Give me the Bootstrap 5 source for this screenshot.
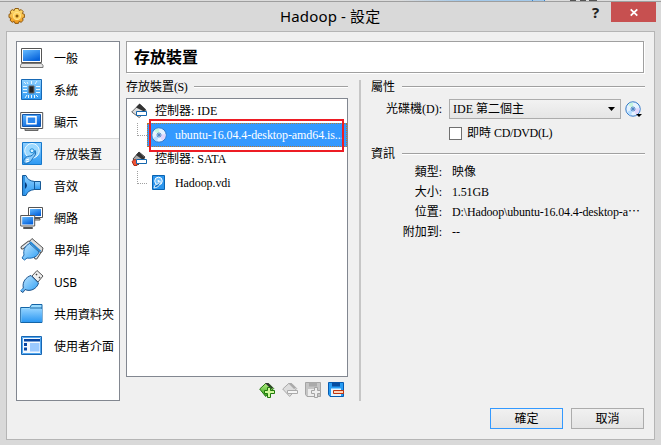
<!DOCTYPE html>
<html lang="zh-Hant">
<head>
<meta charset="utf-8">
<title>Hadoop - 設定</title>
<link rel="stylesheet" href="https://cdn.jsdelivr.net/npm/bootstrap@5.3.0/dist/css/bootstrap.min.css">
<style>
body{width:661px;height:445px;background:#d9d9d9;color:#000;font:12px/16px "Liberation Serif","Noto Sans CJK TC",serif;overflow:hidden}
svg{display:block;flex:none;overflow:visible}
.backdrop{height:2px;border-bottom:1px solid #9e9e9e;background:linear-gradient(90deg,#dcdcdc 400px,#a3c9ea 460px 532px,#3c87d0 532px 533px,#a3c9ea 533px 544px,#3c87d0 544px 545px,#dcdcdc 545px 570px,#555 570px 576px,#ddd 576px 580px,#555 580px 586px,#ddd 586px 589px,#555 589px 597px,#ddd 597px)}
.titlebar{height:29px;padding-left:8px}
.gear{margin-top:5px}
.caption{font:15px/20px "Noto Sans","Noto Sans CJK TC",sans-serif;letter-spacing:.15px;padding-top:4px;width:306px}
.help{font:bold 15px/20px "Noto Sans",sans-serif;color:#222;width:19px}
.close-btn{width:45px;height:20px;background:#c75050;border:0;margin:0 5px 0 6px;padding:0 0 0 1px}
.client{margin:0 6px;width:649px;height:409px;background:#f0f0f0;border:1px solid #b5b5b5;padding:9px}
.pages{width:104px;height:360px;background:#fff;border:1px solid #828790;font:12px/16px "Noto Sans","Noto Sans CJK TC",sans-serif}
.page-item{height:32px;padding:1px 0 0 3px;gap:10px;border:1px solid transparent;border-width:1px 0}
.page-item svg{margin-top:-1px}
.page-item.chosen{background:#f5f5f5;border-color:#dadada}
.main-area{margin-left:6px;width:518px}
.page-title{height:32px;background:#fff;border:1px solid #a0a0a0;box-shadow:1px 1px #fff;font:bold 16px/29px "Noto Sans CJK TC",sans-serif;padding-left:7px}
.body-row{width:520px;height:321px;margin-top:7px}
.left-col{width:222px}
.right-col{width:274px;margin-left:10px}
.divider{width:2px;background:#c6c6c6;margin-left:11px}
.group-title{height:13px;gap:7px}
.group-title::after{content:"";flex:1;height:2px;background:#a0a0a0;border-bottom:1px solid #fff}
.tight{letter-spacing:-.5px}
.tree{height:279px;margin-top:5px;background:#fff;border:1px solid #828790}
.tree-row{height:24px;padding-left:4px}
.ctl{gap:7px}
.branch{width:10px;height:13px;flex:none;margin:-12px 0 0 6px;border:1px dotted #a0a0a0;border-width:0 0 1px 1px}
.entry{height:24px;flex:1;min-width:0;padding-left:3px;gap:8px;border:1px dotted transparent}
.entry.chosen{background:#3399ff;color:#fff;border-color:#b87830}
.nm{letter-spacing:-.08px}
.marker{position:absolute;left:149px;top:119px;width:195px;height:33px;border:2px solid #ed1c24}
.tools{height:16px;gap:7px;margin-top:5px}
.lbl{width:71px;text-align:right;flex:none}
.info-row .lbl{margin-right:10px}
.drive-row{margin-top:6px}
.drive{width:172px;height:20px;border:1px solid #acacac;background:linear-gradient(#f2f2f2,#e5e5e5);margin-left:7px;padding:0 5px 0 3px}
.live-row{margin:7px 0 0 78px;height:14px}
.live{width:13px;height:13px;border:1px solid #707070;background:#fff;margin-right:5px}
.mid-title{margin-top:7px}
.info-list{margin-top:2px}
.info-row{height:20px}
.path{letter-spacing:-.14px}
.short{letter-spacing:-.35px}
.actions{margin:7px 1px 0 0}
.dlg{width:73px;height:21px;padding:0;border:1px solid #acacac;background:linear-gradient(#f1f1f1,#e4e4e4);font-size:12px;line-height:18px;color:#000}
.dlg.main{border-color:#3399ff}
</style>
<script src="https://cdn.jsdelivr.net/npm/bootstrap@5.3.0/dist/js/bootstrap.bundle.min.js"></script>
</head>
<body>
<svg width="0" height="0" class="position-absolute">
<defs>
<linearGradient id="blue" x1="0" y1="0" x2="0" y2="1"><stop stop-color="#8ed0ff"/><stop offset="1" stop-color="#2c98f2"/></linearGradient>
<linearGradient id="screen" x1="0" y1="0" x2=".6" y2="1"><stop stop-color="#64baff"/><stop offset="1" stop-color="#0764dc"/></linearGradient>
<linearGradient id="pale" x1="0" y1="0" x2="1" y2="1"><stop stop-color="#c7eaff"/><stop offset="1" stop-color="#2b9df5"/></linearGradient>
<linearGradient id="green" x1="0" y1="0" x2="0" y2="1"><stop stop-color="#b5ef83"/><stop offset="1" stop-color="#2d9e14"/></linearGradient>
<linearGradient id="gold" x1="0" y1="0" x2="0" y2="1"><stop stop-color="#ffe47a"/><stop offset="1" stop-color="#ef9517"/></linearGradient>
<symbol id="disc" viewBox="0 0 16 16"><circle cx="8" cy="8" r="7.2" fill="#e4f2ff" stroke="#3278c8"/><path d="M8 8 3 3.500A7 7 0 0 1 8 1.400Z" fill="#c5f4df"/><path d="M8 8 14.500 7A7 7 0 0 1 11 13.800Z" fill="#e0d5fb"/><path d="M8 8 2 11A7 7 0 0 0 6 14.500Z" fill="#b4dcff"/><circle cx="8" cy="8" r="2" fill="#fff" stroke="#2469b8" stroke-width=".8"/><circle cx="8" cy="8" r="1.100" fill="#2469b8"/></symbol>
</defs>
</svg>

<div class="backdrop"></div>
<header class="titlebar d-flex align-items-start">
  <svg class="gear" width="18" height="18" viewBox="0 0 18 18"><path d="M7 1.500h3.500l.7 2 2-.9 2 2-.8 2 2 .7v3.200l-2 .8.8 2-2.100 2-2-.9-.7 2H7l-.8-2-2 .9-2.100-2 .9-2-2-.8V7.300l2-.7-.9-2 2.100-2 2 .9z" fill="url(#gold)" stroke="#8f5a12"/><circle cx="9" cy="9" r="3.700" fill="#ffd15c" stroke="#ffe48c"/><circle cx="9" cy="9" r="1.500" fill="#89580c"/></svg>
  <div class="caption ms-auto">Hadoop - 設定</div>
  <div class="help text-center">?</div>
  <button class="close-btn d-flex align-items-center justify-content-center" aria-label="關閉"><svg width="8" height="7" viewBox="0 0 8 7"><path d="m.7.3 6.600 6.400m0-6.400L.7 6.700" stroke="#fff" stroke-width="1.800"/></svg></button>
</header>

<main class="client">
  <div class="d-flex">
    <nav class="pages">
      <div class="page-item d-flex align-items-center"><svg width="24" height="24"><path d="M1.500 2.500h20v14h-20z" fill="#fff" stroke="#555"/><path d="M3 4h17v11H3z" fill="url(#screen)"/><path d="M1.500 17.500h20l1.500 2v2H.5v-2z" fill="#e4e4e4" stroke="#777"/></svg>一般</div>
      <div class="page-item d-flex align-items-center"><svg width="24" height="24"><path d="M1.500 1.500h20v20h-20z" fill="url(#blue)" stroke="#1769b5"/><path d="M9 8h5v7H9z" fill="#222" stroke="#666"/><path d="M3 8.500h4m-4 3h4m-4 3h4m9-6h4m-4 3h4m-4 3h4M8.500 17v3m3-3v3m3-3v3M7 4l1 2m3.500-3v3m5.500-3-2 3M4 4l2 2M5 20l2-3m11 2-2-2" stroke="#e5f6ff" fill="none"/></svg>系統</div>
      <div class="page-item d-flex align-items-center"><svg width="24" height="24"><path d="M.7 2.500h22v16H.7z" fill="#fff" stroke="#555"/><path d="M2.500 4.500h18v12h-18z" fill="url(#screen)" stroke="#1456aa"/><path d="M7 6.700h9v7H7z" fill="#2a86ed" stroke="#fff" stroke-width="1.500"/><path d="M5 19h13v1.500H5z" fill="#ddd" stroke="#666"/></svg>顯示</div>
      <div class="page-item chosen d-flex align-items-center"><svg width="24" height="24"><path d="M2.500.5h19v22h-19z" fill="url(#blue)" stroke="#1678cb"/><circle cx="12" cy="8.800" r="7.300" fill="#9bd8ff" stroke="#edfaff"/><circle cx="12" cy="8.800" r="2" fill="#d8f1ff" stroke="#188bd8"/><path d="M4 21c-1-4 2-7 7-7 1.500-1.500 4-2 4-5.500 2 3.500-1 6-2.500 8C11 20 8 22 4 21z" fill="#8accfc" stroke="#176eb9"/><path d="m6 18 3-1m-3 3 3-1" stroke="#fff"/></svg>存放裝置</div>
      <div class="page-item d-flex align-items-center"><svg width="24" height="24"><path d="M14 7.500h6.500v8H14z" fill="url(#blue)" stroke="#185994"/><path d="M2.500 1.500H6C7 5 10 7 14.500 7.500v8C10 16 7 18 6 21.500H2.500z" fill="url(#blue)" stroke="#175a99"/><path d="M3 2h2v19H3z" fill="#2f92e4"/><path d="M5 8q4 3.500 0 7z" fill="#083e7e"/></svg>音效</div>
      <div class="page-item d-flex align-items-center"><svg width="24" height="24"><g stroke="#555"><path d="M8.500 1.500h14v10h-14z" fill="#fff"/><path d="M14 12.500h6v1.500h-6z" fill="#ddd"/></g><path d="M10 3h11v7H10z" fill="url(#screen)"/><path d="M.7 9.500h14v10.500H.7z" fill="#fff" stroke="#555"/><path d="M2.200 11h11v7.500h-11z" fill="url(#screen)"/><path d="M3.500 21.500h9v1h-9z" fill="#ddd" stroke="#555"/></svg>網路</div>
      <div class="page-item d-flex align-items-center"><svg width="24" height="24"><path d="M9 4.500 2.500 9.500" stroke="#555" stroke-width="4" stroke-linecap="round"/><path d="M9 4.500 2.500 9.500" stroke="#e3e9ef" stroke-width="2" stroke-linecap="round"/><path d="M19.500 14 16 19.500" stroke="#555" stroke-width="4" stroke-linecap="round"/><path d="M19.500 14 16 19.500" stroke="#e3e9ef" stroke-width="2" stroke-linecap="round"/><path d="M9.500 5.500 19 14c-1 4-6 7-12 6L4.500 22 2 20l2-3c-1-5 1-9 5.500-11.500z" fill="url(#pale)" stroke="#1d68ad"/><path d="m9.500 3.500 2.500-3 11 9.500-1 4-2 .5z" fill="#ddd" stroke="#555"/><path d="m10 4 10.500 9.500" stroke="#2487d6" stroke-width="2"/></svg>串列埠</div>
      <div class="page-item d-flex align-items-center"><svg width="24" height="24"><path d="m12 6 5-5.500 6 5.500-5 6z" fill="#eee" stroke="#555"/><path d="m16 4 1 1m2 2 1 1" stroke="#444" stroke-width="1.500"/><path d="M11 5.500 18.500 13C17 19 10 22 5 19.500L3 22.500.7 21l2.600-3C2 12 6 7 11 5.500z" fill="url(#pale)" stroke="#1d538c"/><path d="M1.500 21q.5-1.500 2-1" fill="none" stroke="#59aef0" stroke-width="2"/></svg>USB</div>
      <div class="page-item d-flex align-items-center"><svg width="24" height="24"><path d="M.7 20.500V5.500h9l2-3H22v18z" fill="#9bdcff" stroke="#1464a6"/><path d="M1.500 7H22v13H1.500z" fill="url(#blue)"/><path d="M10 6h12" stroke="#1464a6"/></svg>共用資料夾</div>
      <div class="page-item d-flex align-items-center"><svg width="24" height="24"><path d="M1.500 2.500h20v18h-20z" fill="#f4f9ff" stroke="#1766b3"/><path d="M2.500 3.500h18v16h-18z" fill="none" stroke="#50a6ef"/><path d="M4 5h16v2.500H4zM4 9h3v3H4zm0 4.500h3v3H4z" fill="#0746a3"/><path d="M10 9h9.500v8.500H10z" fill="#9bc9ff"/></svg>使用者介面</div>
    </nav>
    <section class="main-area">
      <div class="page-title">存放裝置</div>
      <div class="body-row d-flex">
        <div class="left-col">
          <div class="group-title d-flex align-items-center"><span>存放裝置<span class="tight">(S)</span></span></div>
          <div class="tree">
            <div class="tree-row ctl d-flex align-items-center"><svg width="17" height="16"><path d="m.7 9 7-7h2l5.500 6-7 6.500z" fill="#ddd" stroke="#666"/><path d="m5 4.500 3.500-4 6.500 6-2 2z" fill="#333"/><path d="M5.500 8.500h10v4h-10z" fill="#fff" stroke="#1466ad"/></svg><span>控制器: IDE</span></div>
            <div class="tree-row d-flex align-items-center"><div class="branch"></div><div class="entry chosen d-flex align-items-center"><svg width="16" height="16"><use href="#disc"/></svg><span class="nm text-nowrap">ubuntu-16.04.4-desktop-amd64.is...</span></div></div>
            <div class="tree-row ctl d-flex align-items-center"><svg width="17" height="16"><path d="m2 8 6-7 6 5-7 8z" fill="#aaa" stroke="#444"/><path d="m5 4 3-3 6 6-2 2z" fill="#333"/><path d="M1 10.500q4-4 5 0v4H3z" fill="#ef5336" stroke="#a72e1b"/><path d="M5.500 8.500h10v4h-10z" fill="#fff" stroke="#1466ad"/></svg><span>控制器: SATA</span></div>
            <div class="tree-row d-flex align-items-center"><div class="branch"></div><div class="entry d-flex align-items-center"><svg width="16" height="16"><path d="M1.500.5h12v14h-12z" fill="#2b95ed" stroke="#0963b1"/><circle cx="7.500" cy="6" r="3.800" fill="#73bffa" stroke="#fff"/><circle cx="7.500" cy="6" r="1" fill="#fff"/><path d="M3 13q0-4 4-4l2-3q1 6-6 7z" fill="#1477cb" stroke="#fff" stroke-width=".8"/></svg><span class="nm">Hadoop.vdi</span></div></div>
          </div>
          <div class="tools d-flex justify-content-end pe-1">
            <svg width="16" height="16"><path d="m.7 7 6-5.500 3 0 5 5-8 8z" fill="url(#green)" stroke="#23760e"/><path d="m6 1 3 0 5 5-2 1z" fill="#333"/><path d="M8.500 5.500h3v3h4v3h-4v4h-3v-4h-3v-3h3z" fill="#d0f99c" stroke="#1f7a0c"/></svg>
            <svg width="16" height="16"><path d="m.7 7 6-5.500 3 0 5 5-7 8z" fill="#ddd" stroke="#aaa"/><path d="m6 1 3 0 5 5-2 1z" fill="#aaa"/><path d="M5.500 8.500h10v3h-10z" fill="#f5f5f5" stroke="#aaa"/></svg>
            <svg width="16" height="16"><path d="M.5.500h15v14H2l-1.500-2z" fill="#c5c5c5" stroke="#a5a5a5"/><path d="M4 .500h8v4H4z" fill="#aaa"/><path d="M3 7h10v7H3z" fill="#ededed"/><path d="M9.500 5.500h3v3h3v3h-3v4h-3v-4h-3v-3h3z" fill="#eee" stroke="#a5a5a5"/></svg>
            <svg width="16" height="16"><path d="M.5.500h15v14H2l-1.500-2z" fill="#279cf4" stroke="#075bb0"/><path d="M4 .500h8v4H4z" fill="#064c9f"/><path d="M3 6.500h10v7.500H3z" fill="#e5f5ff"/><path d="M5.500 8.500h10v3h-10z" fill="#ffd5bb" stroke="#bf330e"/></svg>
          </div>
        </div>
        <div class="divider"></div>
        <div class="right-col">
          <div class="group-title d-flex align-items-center">屬性</div>
          <div class="drive-row d-flex align-items-center"><span class="lbl">光碟機(D):</span>
            <div class="drive d-flex align-items-center justify-content-between"><span>IDE 第二個主</span><svg width="7" height="4"><path d="M0 0h7L3.500 4z"/></svg></div>
            <svg width="17" height="17" class="ms-1"><use href="#disc" width="16" height="16"/><path d="M11 13h6l-3 3z"/></svg>
          </div>
          <div class="live-row d-flex align-items-center"><span class="live"></span><span>即時 <span class="short">CD/DVD(L)</span></span></div>
          <div class="group-title mid-title d-flex align-items-center">資訊</div>
          <div class="info-list">
            <div class="info-row d-flex align-items-center"><span class="lbl">類型:</span><span>映像</span></div>
            <div class="info-row d-flex align-items-center"><span class="lbl">大小:</span><span class="path">1.51GB</span></div>
            <div class="info-row d-flex align-items-center"><span class="lbl">位置:</span><span class="path text-nowrap">D:\Hadoop\ubuntu-16.04.4-desktop-a⋯</span></div>
            <div class="info-row d-flex align-items-center"><span class="lbl">附加到:</span><span>--</span></div>
          </div>
        </div>
      </div>
    </section>
  </div>
  <div class="actions d-flex justify-content-end gap-2">
    <button class="dlg main">確定</button><button class="dlg">取消</button>
  </div>
</main>
<div class="marker"></div>
</body>
</html>
